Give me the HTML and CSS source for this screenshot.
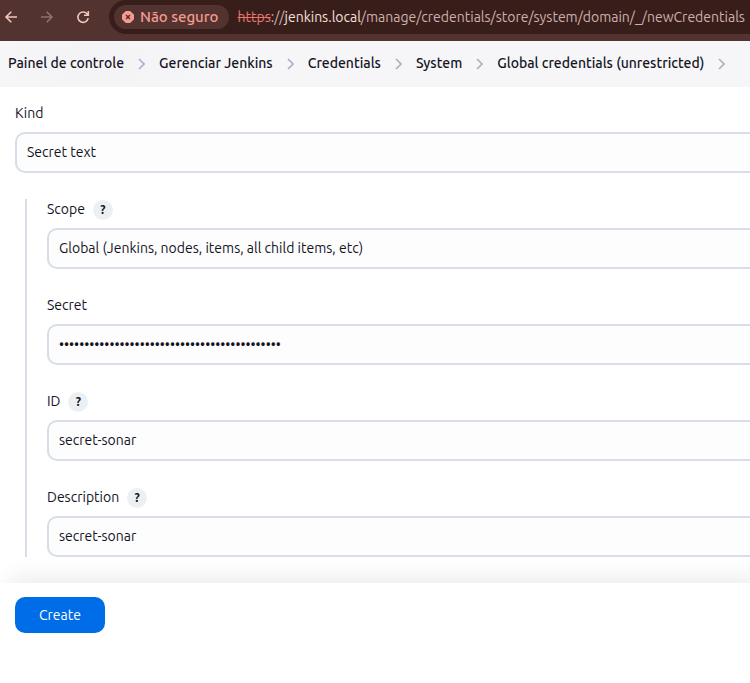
FILE: index.html
```html
<!DOCTYPE html>
<html lang="pt-BR">
<head>
<meta charset="utf-8">
<meta name="viewport" content="width=device-width, initial-scale=1">
<title>New credentials - Jenkins</title>
<link rel="stylesheet" href="styles.css">
</head>
<body>
<header class="toolbar">
  <div class="nav">
    <button class="nav-button" type="button" aria-label="Voltar"><svg viewBox="0 0 14 14"><path d="M13 7H2M7.300 1.700L2 7l5.300 5.300"/></svg></button>
    <button class="nav-button nav-off" type="button" aria-label="Avançar"><svg viewBox="0 0 14 14"><path d="M1 7h11M6.700 1.700L12 7l-5.300 5.300"/></svg></button>
    <button class="nav-button" type="button" aria-label="Recarregar"><svg viewBox="0 0 14 14"><path d="M11.500 4.400A5.200 5.200 0 1 0 12.200 8.200M12.300 1v4.300H8"/></svg></button>
  </div>
  <div class="address">
    <button class="chip" type="button">
      <svg class="warn" viewBox="0 0 12 12"><path class="warn-shape" d="M3.800 0h4.400L12 3.800v4.400L8.200 12H3.800L0 8.200V3.800z"/><path class="warn-cross" d="M4 4l4 4M8 4L4 8"/></svg>
      <span>Não seguro</span>
    </button>
    <div class="url"><s>https</s>://<span class="host">jenkins.local</span>/manage/credentials/store/system/domain/_/newCredentials</div>
  </div>
</header>
<nav class="crumbs" aria-label="Breadcrumb">
  <a href="#">Painel de controle</a><svg viewBox="0 0 7 12"><path d="M1 1l5 5-5 5"/></svg>
  <a href="#">Gerenciar Jenkins</a><svg viewBox="0 0 7 12"><path d="M1 1l5 5-5 5"/></svg>
  <a href="#">Credentials</a><svg viewBox="0 0 7 12"><path d="M1 1l5 5-5 5"/></svg>
  <a href="#">System</a><svg viewBox="0 0 7 12"><path d="M1 1l5 5-5 5"/></svg>
  <a href="#">Global credentials (unrestricted)</a><svg viewBox="0 0 7 12"><path d="M1 1l5 5-5 5"/></svg>
</nav>
<form class="form">
  <div class="fields">
    <div class="field">
      <div class="label"><label for="kind">Kind</label></div>
      <select class="control" id="kind"><option>Secret text</option></select>
    </div>
    <div class="group">
      <div class="field">
        <div class="label"><label for="scope">Scope</label><button class="help" type="button" aria-label="Help: Scope">?</button></div>
        <select class="control" id="scope"><option>Global (Jenkins, nodes, items, all child items, etc)</option></select>
      </div>
      <div class="field">
        <div class="label"><label for="secret">Secret</label></div>
        <input class="control" id="secret" type="password" value="00000000000000000000000000000000000000000000">
      </div>
      <div class="field">
        <div class="label"><label for="id">ID</label><button class="help" type="button" aria-label="Help: ID">?</button></div>
        <input class="control" id="id" type="text" value="secret-sonar">
      </div>
      <div class="field">
        <div class="label"><label for="description">Description</label><button class="help" type="button" aria-label="Help: Description">?</button></div>
        <input class="control" id="description" type="text" value="secret-sonar">
      </div>
    </div>
  </div>
  <div class="actions"><button class="create" type="submit">Create</button></div>
</form>
</body>
</html>
```
FILE: styles.css
```css
* { box-sizing: border-box; }
body {
  margin: 0;
  background: #fff;
  color: #14141f;
  font: 14px/20px "Ubuntu", "Noto Sans", sans-serif;
}
button, input, select { font: inherit; color: inherit; }
button { border: 0; padding: 0; }
svg { display: block; flex: none; fill: none; }

.toolbar {
  display: flex;
  height: 41px;
  padding-bottom: 7px;
  background: #53332f;
}
.nav {
  display: flex;
  flex: none;
  align-items: center;
  gap: 22px;
  padding: 0 19px 0 4px;
}
.nav-button { background: none; }
.nav-button svg { width: 14px; height: 14px; stroke: #f5c4bc; stroke-width: 1.6; }
.nav-off svg { stroke: #93716c; }
.address {
  display: flex;
  flex: 1;
  min-width: 0;
  align-items: center;
  gap: 8px;
  padding-left: 5px;
  border-radius: 17px 0 0 17px;
  background: #381e1b;
}
.chip {
  display: flex;
  flex: none;
  align-items: center;
  gap: 6px;
  height: 24px;
  padding: 0 11px 0 8px;
  border-radius: 12px;
  background: #53332f;
  color: #f79a8f;
  font-size: 15px;
  font-weight: 500;
}
.warn { width: 12px; height: 12px; }
.warn-shape { fill: #f79a8f; }
.warn-cross { stroke: #53332f; stroke-width: 1.5; }
.url { flex: 1; min-width: 0; overflow: hidden; white-space: nowrap; color: #cfb1ac; }
.url s { color: #e8746a; }
.host { color: #f6e0dc; }

.crumbs {
  display: flex;
  align-items: center;
  gap: 14px;
  height: 46px;
  padding: 0 8px 2px;
  overflow: hidden;
  background: radial-gradient(ellipse 110px 40px at 100px 22px, #f3f3f6, #f6f6f9);
  white-space: nowrap;
  font-weight: 500;
}
.crumbs a { color: inherit; text-decoration: none; }
.crumbs svg { width: 7px; height: 12px; margin-top: 2px; stroke: #a3b2c6; stroke-width: 1.6; }

.fields { padding: 16px 0 26px 15px; }
.field + .field, .group { margin-top: 26px; }
.group { margin-left: 10px; padding-left: 20px; border-left: 2px solid #d7dde9; }
.label { display: flex; align-items: flex-start; gap: 8px; height: 29px; }
.help {
  width: 20px;
  height: 20px;
  margin-top: 1px;
  border-radius: 50%;
  background: #edf0f3;
  font-size: 12px;
  font-weight: 700;
}
.control {
  display: block;
  width: 100%;
  height: 41px;
  margin: 0;
  padding: 0 10px 2px;
  border: 2px solid #d7dde9;
  border-right: 0;
  border-radius: 10px 0 0 10px;
  outline: 0;
  background: #fdfdfe;
  appearance: none;
}
.actions {
  padding: 14px 15px 50px;
  background: #fff;
  box-shadow: 10px -4px 24px rgba(0, 0, 0, 0.09);
}
.create {
  height: 36px;
  padding: 0 24px;
  border-radius: 10px;
  background: #006de8;
  color: #fff;
}
```
